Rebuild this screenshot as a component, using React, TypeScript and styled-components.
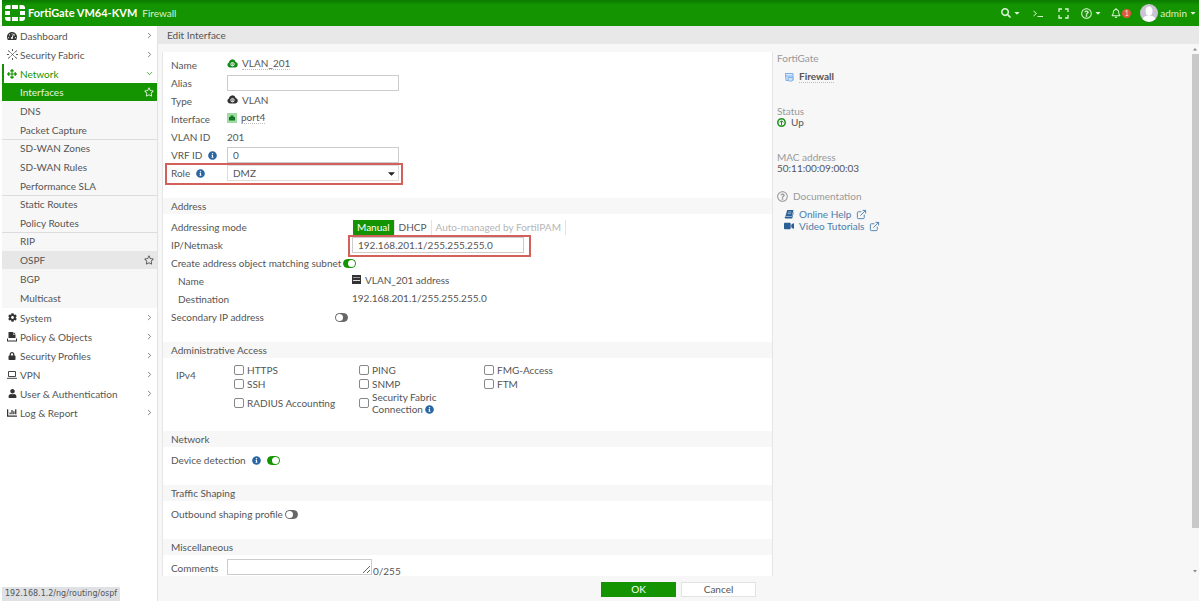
import React from 'react';
import styled, { createGlobalStyle, css } from 'styled-components';
import {
  FaTachometerAlt, FaCog, FaLock, FaUser, FaChartBar, FaInfoCircle,
  FaRegStar, FaSearch, FaRegQuestionCircle, FaRegBell, FaVideo, FaCaretDown, FaArrowsAlt,
} from 'react-icons/fa';
import { FiExternalLink, FiChevronRight, FiChevronDown } from 'react-icons/fi';

const green = '#149400';
const ink = '#555';

const GlobalStyle = createGlobalStyle`
  * { box-sizing: border-box; }
  body {
    margin: 0;
    background: #fff;
    color: ${ink};
    font: 10px/18px Lato, "Open Sans", sans-serif;
  }
  button, input, select, textarea { font: inherit; color: inherit; margin: 0; }
  a { color: inherit; text-decoration: none; }
  svg { display: block; flex: none; }
`;

const Shell = styled.div`
  display: flex;
  flex-direction: column;
  height: 100vh;
  padding: 0 1px 5px 2px;
`;

/* Top bar */
const TopBar = styled.header`
  display: flex;
  align-items: center;
  flex: none;
  height: 26px;
  padding: 0 2px 0 3px;
  color: #d9f2d4;
  background: linear-gradient(#0b7a00, ${green} 5px);
`;
const Brand = styled.strong`
  margin: 0 5px 0 3px;
  font-size: 11px;
  color: #fff;
`;
const Tools = styled.div`
  display: flex;
  align-items: center;
  gap: 9px;
  margin-left: auto;
`;
const ToolButton = styled.button<{ $roomy?: boolean }>`
  display: flex;
  align-items: center;
  gap: 2px;
  padding: 0 ${p => (p.$roomy ? 3 : 0)}px;
  border: 0;
  background: none;
  color: #d9f2d4;
`;
const Badge = styled.span`
  width: 9px;
  height: 9px;
  margin-left: -1px;
  border-radius: 5px;
  background: #e8543f;
  font-size: 7px;
  line-height: 9px;
  text-align: center;
`;

/* Side navigation */
const Body = styled.div`
  display: flex;
  flex: 1;
  min-height: 0;
`;
const Nav = styled.nav`
  flex: none;
  width: 156px;
  border-right: 1px solid #e2e2e2;
`;
const NavItem = styled.a<{ $open?: boolean }>`
  display: flex;
  align-items: center;
  gap: 3px;
  height: 19px;
  padding: 0 3px 0 5px;
  ${p => p.$open && css`
    padding-left: 3px;
    border-left: 2px solid ${green};
    color: ${green};
  `}
`;
const NavIcon = styled.span<{ $open?: boolean }>`
  display: flex;
  width: 10px;
  justify-content: center;
  color: ${p => (p.$open ? green : '#333')};
`;
const Trailing = styled.span`
  display: flex;
  margin-left: auto;
`;
const SubNav = styled.div`
  padding-bottom: 1px;
  background: #f7f7f7;
`;
const SubGroup = styled.div`
  display: grid;
  gap: 1px;
  & + & { box-shadow: inset 0 1px #dcdcdc; }
`;
const SubItem = styled.a<{ $state?: 'active' | 'hover' }>`
  display: flex;
  align-items: center;
  height: 18px;
  padding: 0 3px 0 18px;
  ${p => p.$state === 'active' && css`background: ${green}; color: #e4f6e0;`}
  ${p => p.$state === 'hover' && css`background: #e7e7e7;`}
`;

/* Main area */
const Main = styled.main`
  display: flex;
  flex-direction: column;
  flex: 1;
  min-width: 0;
  background: #f7f7f7;
`;
const TitleBar = styled.h1`
  flex: none;
  height: 18px;
  margin: 0;
  padding-left: 9px;
  background: #e8e8e8;
  font-size: 10px;
  font-weight: 400;
`;
const Workspace = styled.div`
  display: flex;
  flex: 1;
  min-height: 0;
  overflow: hidden;
`;
const Form = styled.form`
  flex: 1;
  min-width: 0;
  margin: 8px 0 0 4px;
  padding-top: 4px;
  border: solid #e6e6e6;
  border-width: 0 1px;
  background: #fff;
  overflow: hidden;
`;
const Section = styled.section`
  margin-bottom: 16px;
`;
const Band = styled.h2`
  height: 16px;
  margin: 0 0 4px;
  padding-left: 8px;
  background: #f7f7f7;
  font-size: 10px;
  font-weight: 400;
  line-height: 16px;
`;
const Row = styled.div<{ $wide?: boolean; $nested?: boolean }>`
  position: relative;
  display: grid;
  grid-template-columns: ${p => (p.$wide ? 181 : 56)}px minmax(0, 1fr);
  height: 18px;
  padding-left: 8px;
  ${p => p.$nested && css`
    grid-template-columns: 174px minmax(0, 1fr);
    padding-left: 15px;
  `}
`;
const Label = styled.label<{ $spread?: boolean; $tight?: boolean }>`
  display: flex;
  align-items: center;
  gap: ${p => (p.$tight || p.$spread ? 2 : 6)}px;
  white-space: nowrap;
  ${p => p.$spread && css`
    justify-content: space-between;
    padding-right: 4px;
  `}
`;
const Value = styled.div`
  display: flex;
  align-items: center;
  gap: 4px;
  height: 15px;
`;
const Dotted = styled.span`
  border-bottom: 1px dotted #bbb;
  line-height: 12px;
`;
const Field = styled.input`
  width: 172px;
  height: 16px;
  margin-top: 1px;
  padding: 0 5px;
  border: 1px solid #ccc;
  background: #fff;
  line-height: 14px;
`;
const Picker = styled.div`
  display: grid;
  grid-template-columns: 172px;
  align-items: center;
  & > * { grid-area: 1 / 1; }
  & > svg { justify-self: end; margin-right: 2px; color: #222; pointer-events: none; }
`;
const Select = styled.select`
  height: 16px;
  padding: 0 5px;
  border: 1px solid #ddd;
  border-radius: 0;
  background: #fff;
  appearance: none;
  line-height: 14px;
`;
const Highlight = styled.span<{ $left: number; $width: number }>`
  position: absolute;
  top: -1px;
  left: ${p => p.$left}px;
  width: ${p => p.$width}px;
  height: 22px;
  border: 2px solid #d4605c;
  pointer-events: none;
`;
const Segments = styled.div`
  display: flex;
  align-items: center;
  padding-left: 1px;
`;
const Segment = styled.button<{ $on?: boolean }>`
  height: 15px;
  padding: 0 4px;
  border: 0;
  border-right: 1px solid #e2e2e2;
  background: ${p => (p.$on ? green : '#fff')};
  color: ${p => (p.$on ? '#fff' : ink)};
  line-height: 15px;
  white-space: nowrap;
  &:disabled { color: #b5b5b5; }
`;
const Toggle = styled.input`
  position: relative;
  flex: none;
  width: 13px;
  height: 9px;
  border: 1px solid #666;
  border-radius: 5px;
  background: #666;
  appearance: none;
  &::after {
    content: '';
    position: absolute;
    top: 0;
    left: 0;
    width: 7px;
    height: 7px;
    border-radius: 4px;
    background: #fff;
  }
  &:checked { background: ${green}; border-color: ${green}; }
  &:checked::after { left: 4px; }
`;
const AccessGrid = styled.div`
  display: grid;
  grid-template-columns: 125px 125px 125px;
  grid-auto-rows: minmax(14px, auto);
  padding: 1px 0 0 7px;
`;
const AccessRow = styled.div`
  display: grid;
  grid-template-columns: 51px minmax(0, 1fr);
  padding-left: 13px;
`;
const AccessLabel = styled.span`
  padding-top: 4px;
`;
const Check = styled.label`
  display: flex;
  align-items: center;
  gap: 3px;
  padding-right: 20px;
  line-height: 12px;
`;
const CheckBox = styled.input`
  flex: none;
  width: 10px;
  height: 10px;
  border: 1px solid #888;
  border-radius: 2px;
  background: #fff;
  appearance: none;
`;
const InfoMark = styled(FaInfoCircle)`
  color: #2a66a3;
`;
const InlineInfo = styled(InfoMark)`
  display: inline-block;
  vertical-align: -1px;
`;
const CommentBox = styled.div`
  display: flex;
  align-items: flex-end;
  gap: 1px;
  line-height: 12px;
`;
const Comment = styled.textarea`
  width: 145px;
  height: 16px;
  margin-bottom: 2px;
  padding: 0 4px;
  border: 1px solid #ccc;
  background: #fff;
  resize: both;
`;

/* Side information */
const Aside = styled.aside`
  flex: none;
  width: 418px;
  padding: 9px 4px;
  line-height: 11px;
`;
const Info = styled.div<{ $gap: number }>`
  margin-bottom: ${p => p.$gap}px;
`;
const Muted = styled.div`
  display: flex;
  gap: 5px;
  color: #999;
`;
const Line = styled.div<{ $indent?: boolean }>`
  display: flex;
  align-items: center;
  gap: 5px;
  padding-left: ${p => (p.$indent ? 7 : 0)}px;
`;
const Device = styled(Line)`
  margin-top: 6px;
  font-weight: 700;
`;
const DocLink = styled.a`
  display: flex;
  align-items: center;
  gap: 5px;
  padding-left: 7px;
  color: #4a7dac;
  line-height: 12px;
`;
const DocIcon = styled.span`
  display: flex;
  width: 10px;
  color: #2a5f96;
`;
const DocList = styled.div`
  margin-top: 6px;
`;
const Scroll = styled.div`
  display: flex;
  flex-direction: column;
  align-items: center;
  justify-content: space-between;
  flex: none;
  width: 8px;
  color: #888;
`;
const Thumb = styled.div`
  width: 7px;
  flex: 1;
  margin-bottom: 38px;
  background: #c9c9c9;
`;
const Footer = styled.footer`
  display: flex;
  justify-content: center;
  gap: 5px;
  flex: none;
  height: 25px;
  padding-top: 6px;
`;
const Action = styled.button<{ $primary?: boolean }>`
  width: 75px;
  height: 15px;
  padding: 0;
  border: 1px solid ${p => (p.$primary ? green : '#e3e3e3')};
  background: ${p => (p.$primary ? green : '#fff')};
  color: ${p => (p.$primary ? '#fff' : ink)};
  line-height: 13px;
`;
const StatusTip = styled.div`
  position: fixed;
  left: 2px;
  bottom: 5px;
  height: 14px;
  padding: 0 3px;
  background: #dfe1e5;
  font: 8px/14px "DejaVu Sans", sans-serif;
`;

const Logo = () => (
  <svg width="20" height="16" viewBox="0 0 20 16" fill="#fff">
    <path d="M7 0h6v4H7zM7 12h6v4H7zM0 6h5v4H0zM15 6h5v4h-5zM3 0h2.500v4H0V3a3 3 0 0 1 3-3zM17 0h-2.500v4H20V3a3 3 0 0 0-3-3zM0 12h5.500v4H3a3 3 0 0 1-3-3zM20 12h-5.500v4H17a3 3 0 0 0 3-3z" />
  </svg>
);
const FabricIcon = () => (
  <svg width="11" height="11" viewBox="0 0 11 11" fill="none" stroke="#555">
    <path d="M1 1.500l2.500 2M10 1.500l-2.500 2M1 9.500l2.500-2M10 9.500l-2.500-2M5.500 0v2M5.500 9v2M0 5.500h2M9 5.500h2" />
    <path d="M4.300 4.300l2.400 2.400M6.700 4.300L4.300 6.700" />
  </svg>
);
const PolicyIcon = () => (
  <svg width="10" height="10" viewBox="0 0 10 10" fill="#333">
    <path d="M1.500 0H6v2.500h2.500V6h-7z" />
    <path d="M6.500 0l2 2h-2zM0 6.500h1V8.500h8V6.500h1V9.500H0z" />
  </svg>
);
const LaptopIcon = () => (
  <svg width="10" height="8" viewBox="0 0 10 8" fill="none" stroke="#444">
    <path d="M1.500 .5h7v5h-7zM0 7.300h10" />
  </svg>
);
const BookIcon = () => (
  <svg width="10" height="9" viewBox="0 0 10 9">
    <path d="M3.200 0H9.500L7.800 6H1.500zM1 6.500h7L9.600 1.500V3L8.200 8.500H1.500Q0 8 1 6.500z" fill="currentColor" />
    <path d="M4 2h3.500M3.600 3.700h3.500" stroke="#b9cde2" strokeWidth=".7" />
  </svg>
);
const CloudIcon = ({ color }: { color: string }) => (
  <svg width="11" height="9" viewBox="0 0 11 9">
    <path d="M2.800 8.500A2.600 2.600 0 0 1 2 3.500 3.400 3.400 0 0 1 8.700 3 2.800 2.800 0 0 1 8.200 8.500z" fill={color} />
    <circle cx="5.500" cy="5.200" r="1.700" fill="none" stroke="#fff" strokeWidth=".9" />
    <path d="M5.500 4.200v2M4.300 6.200h2.400" stroke="#fff" strokeWidth=".6" />
  </svg>
);
const PortIcon = () => (
  <svg width="10" height="10" viewBox="0 0 10 10">
    <path d="M0 0h10v10H0z" fill="#9fdc9f" />
    <path d="M2 7.500V4h1.500V2.500h3V4H8v3.500z" fill="#17752a" />
  </svg>
);
const AddressIcon = () => (
  <svg width="9" height="9" viewBox="0 0 9 9">
    <path d="M0 0h9v9H0z" fill="#333" />
    <path d="M1 5.500h7" stroke="#ddd" />
    <path d="M1 2.500h7" stroke="#999" />
  </svg>
);
const DeviceIcon = () => (
  <svg width="10" height="10" viewBox="0 0 10 10" fill="none" stroke="#7db0e8">
    <path d="M1 1.500h8v7H2L1.500 1M1 4h8" fill="#dfebfa" />
    <path d="M4 5.500h5V8L6.500 9.500 4 8z" fill="#cfe2f8" />
  </svg>
);
const UpIcon = () => (
  <svg width="9" height="9" viewBox="0 0 9 9" fill="none" stroke="#1c8f1c">
    <circle cx="4.500" cy="4.500" r="3.700" strokeWidth="1.500" />
    <path d="M4.500 7V3M2.800 4.400l1.700-1.700 1.700 1.700" />
  </svg>
);
const PromptIcon = () => (
  <svg width="10" height="9" viewBox="0 0 10 9" fill="none" stroke="currentColor">
    <path d="M.5 2l3 2.500-3 2.500M4.500 7.500H10" />
  </svg>
);
const ExpandIcon = () => (
  <svg width="11" height="11" viewBox="0 0 11 11" fill="none" stroke="currentColor" strokeWidth="1.300">
    <path d="M1 4V1h3M7 1h3v3M10 7v3H7M4 10H1V7" />
  </svg>
);
const Avatar = () => (
  <svg width="18" height="18" viewBox="0 0 18 18">
    <circle cx="9" cy="9" r="9" fill="#c9c3d4" />
    <ellipse cx="9" cy="7" rx="3.500" ry="4.500" fill="#fff" />
    <path d="M2.500 15q1-3 5-3.500h3q4 .5 5 3.500A9 9 0 0 1 2.500 15z" fill="#fff" />
  </svg>
);
const Arrow = ({ up }: { up?: boolean }) => (
  <svg width="6" height="10" viewBox="0 0 6 10" fill="currentColor">
    <path d={up ? 'M3 4l2 2.500H1z' : 'M3 6.500L1 4h4z'} />
  </svg>
);

type Item = { name: string; icon: React.ReactNode; open?: boolean };
const topItems: Item[] = [
  { name: 'Dashboard', icon: <FaTachometerAlt size={10} /> },
  { name: 'Security Fabric', icon: <FabricIcon /> },
  { name: 'Network', icon: <FaArrowsAlt size={10} />, open: true },
];
const bottomItems: Item[] = [
  { name: 'System', icon: <FaCog size={9} /> },
  { name: 'Policy & Objects', icon: <PolicyIcon /> },
  { name: 'Security Profiles', icon: <FaLock size={8} /> },
  { name: 'VPN', icon: <LaptopIcon /> },
  { name: 'User & Authentication', icon: <FaUser size={9} /> },
  { name: 'Log & Report', icon: <FaChartBar size={10} /> },
];
const subGroups = [
  ['Interfaces', 'DNS', 'Packet Capture'],
  ['SD-WAN Zones', 'SD-WAN Rules', 'Performance SLA'],
  ['Static Routes', 'Policy Routes'],
  ['RIP', 'OSPF', 'BGP', 'Multicast'],
];
const subState: Record<string, 'active' | 'hover'> = { Interfaces: 'active', OSPF: 'hover' };
const services = ['HTTPS', 'PING', 'FMG-Access', 'SSH', 'SNMP', 'FTM', 'RADIUS Accounting'];

const NavList = ({ items }: { items: Item[] }) => (
  <>
    {items.map(({ name, icon, open }) => (
      <NavItem key={name} href="#" $open={open}>
        <NavIcon $open={open}>{icon}</NavIcon>
        {name}
        <Trailing>{open ? <FiChevronDown size={9} /> : <FiChevronRight size={9} />}</Trailing>
      </NavItem>
    ))}
  </>
);

export default function App() {
  return (
    <Shell>
      <GlobalStyle />
      <TopBar>
        <Logo />
        <Brand>FortiGate VM64-KVM</Brand>
        <span>Firewall</span>
        <Tools>
          <ToolButton aria-label="Search"><FaSearch size={10} /><FaCaretDown size={8} /></ToolButton>
          <ToolButton $roomy aria-label="Console"><PromptIcon /></ToolButton>
          <ToolButton $roomy aria-label="Full screen"><ExpandIcon /></ToolButton>
          <ToolButton aria-label="Help"><FaRegQuestionCircle size={11} /><FaCaretDown size={8} /></ToolButton>
          <ToolButton aria-label="Notifications"><FaRegBell size={10} /><Badge>1</Badge></ToolButton>
          <ToolButton><Avatar />admin<FaCaretDown size={8} /></ToolButton>
        </Tools>
      </TopBar>
      <Body>
        <Nav>
          <NavList items={topItems} />
          <SubNav>
            {subGroups.map(group => (
              <SubGroup key={group[0]}>
                {group.map(name => (
                  <SubItem key={name} href="#" $state={subState[name]}>
                    {name}
                    {subState[name] && <Trailing><FaRegStar size={10} /></Trailing>}
                  </SubItem>
                ))}
              </SubGroup>
            ))}
          </SubNav>
          <NavList items={bottomItems} />
        </Nav>
        <Main>
          <TitleBar>Edit Interface</TitleBar>
          <Workspace>
            <Form>
              <Section>
                <Row><Label>Name</Label><Value><CloudIcon color="#15891a" /><Dotted>VLAN_201</Dotted></Value></Row>
                <Row><Label htmlFor="alias">Alias</Label><Field id="alias" /></Row>
                <Row><Label>Type</Label><Value><CloudIcon color="#333" />VLAN</Value></Row>
                <Row><Label>Interface</Label><Value><PortIcon /><Dotted>port4</Dotted></Value></Row>
                <Row><Label>VLAN ID</Label><span>201</span></Row>
                <Row><Label htmlFor="vrf">VRF ID <InfoMark size={9} /></Label><Field id="vrf" defaultValue="0" /></Row>
                <Row>
                  <Label htmlFor="role">Role <InfoMark size={9} /></Label>
                  <Picker>
                    <Select id="role" defaultValue="DMZ"><option>DMZ</option><option>LAN</option><option>WAN</option></Select>
                    <FaCaretDown size={11} />
                  </Picker>
                  <Highlight $left={2} $width={238} />
                </Row>
              </Section>
              <Section>
                <Band>Address</Band>
                <Row $wide>
                  <Label>Addressing mode</Label>
                  <Segments>
                    <Segment type="button" $on>Manual</Segment>
                    <Segment type="button">DHCP</Segment>
                    <Segment type="button" disabled>Auto-managed by FortiIPAM</Segment>
                  </Segments>
                </Row>
                <Row $wide>
                  <Label htmlFor="ip">IP/Netmask</Label>
                  <Field id="ip" defaultValue="192.168.201.1/255.255.255.0" />
                  <Highlight $left={185} $width={183} />
                </Row>
                <Row $wide>
                  <Label $spread>Create address object matching subnet<Toggle type="checkbox" defaultChecked /></Label>
                </Row>
                <Row $nested><Label>Name</Label><Value><AddressIcon />VLAN_201 address</Value></Row>
                <Row $nested><Label>Destination</Label><Value>192.168.201.1/255.255.255.0</Value></Row>
                <Row $wide>
                  <Label $spread>Secondary IP address<Toggle type="checkbox" /></Label>
                </Row>
              </Section>
              <Section>
                <Band>Administrative Access</Band>
                <AccessRow>
                  <AccessLabel>IPv4</AccessLabel>
                  <AccessGrid>
                    {services.map(name => <Check key={name}><CheckBox type="checkbox" />{name}</Check>)}
                    <Check><CheckBox type="checkbox" /><span>Security Fabric Connection <InlineInfo size={9} /></span></Check>
                  </AccessGrid>
                </AccessRow>
              </Section>
              <Section>
                <Band>Network</Band>
                <Row $wide><Label>Device detection<InfoMark size={9} /><Toggle type="checkbox" defaultChecked /></Label></Row>
              </Section>
              <Section>
                <Band>Traffic Shaping</Band>
                <Row $wide><Label $tight>Outbound shaping profile<Toggle type="checkbox" /></Label></Row>
              </Section>
              <Section>
                <Band>Miscellaneous</Band>
                <Row>
                  <Label htmlFor="comments">Comments</Label>
                  <CommentBox><Comment id="comments" />0/255</CommentBox>
                </Row>
              </Section>
            </Form>
            <Aside>
              <Info $gap={23}><Muted>FortiGate</Muted><Device $indent><DeviceIcon /><Dotted>Firewall</Dotted></Device></Info>
              <Info $gap={24}><Muted>Status</Muted><Line><UpIcon />Up</Line></Info>
              <Info $gap={17}><Muted>MAC address</Muted><Line>50:11:00:09:00:03</Line></Info>
              <Muted><FaRegQuestionCircle size={11} />Documentation</Muted>
              <DocList>
                <DocLink href="#"><DocIcon><BookIcon /></DocIcon>Online Help <FiExternalLink size={11} /></DocLink>
                <DocLink href="#"><DocIcon><FaVideo size={10} /></DocIcon>Video Tutorials <FiExternalLink size={11} /></DocLink>
              </DocList>
            </Aside>
            <Scroll><Arrow up /><Thumb /><Arrow /></Scroll>
          </Workspace>
          <Footer>
            <Action $primary>OK</Action>
            <Action>Cancel</Action>
          </Footer>
        </Main>
      </Body>
      <StatusTip>192.168.1.2/ng/routing/ospf</StatusTip>
    </Shell>
  );
}
